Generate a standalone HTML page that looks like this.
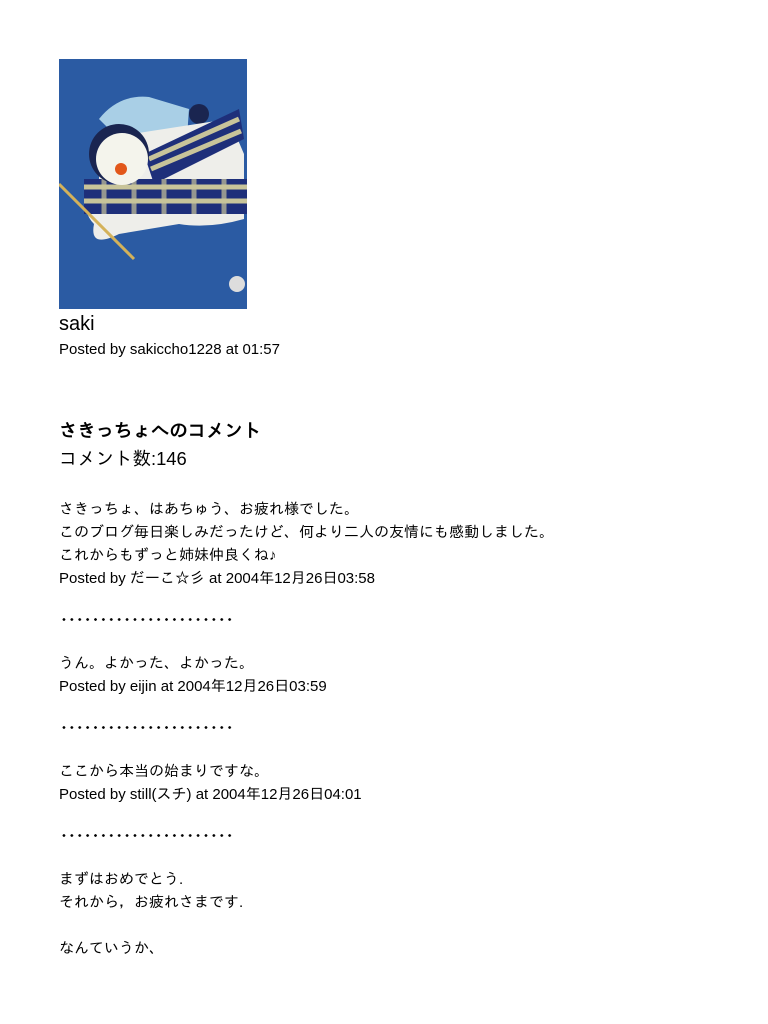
<!DOCTYPE html>
<html><head><meta charset="utf-8"><style>
body{margin:0;background:#fff;width:768px;height:1024px;position:relative;overflow:hidden;font-family:"Liberation Sans","IPAGothic","Noto Sans CJK JP",sans-serif;color:#000}
.t{position:absolute;left:59px;white-space:nowrap;font-size:15px;line-height:23px}
.b{font-size:20px;line-height:26px}
.h{font-weight:bold;font-size:18.4px}
.c{font-size:18.4px}
.d{position:absolute;left:60px;width:174px;height:3px;background:radial-gradient(circle,#000 1.2px,transparent 1.5px) 0 0/7.9px 3px repeat-x}
</style></head><body>
<svg style="position:absolute;left:59px;top:59px" width="188" height="250" viewBox="0 0 188 250">
<rect width="188" height="250" fill="#2b5ba3"/>
<path d="M40 60 Q60 35 90 38 L130 50 L128 78 L60 80Z" fill="#a9cfe6"/>
<circle cx="140" cy="55" r="10" fill="#1a2550"/>
<path d="M40 80 L170 60 L185 95 L185 160 Q150 170 120 165 L60 175 Q30 190 35 165 Q20 150 40 140Z" fill="#eeeeea"/>
<path d="M85 95 L180 50 L185 80 L95 125Z" fill="#1e2f7a"/>
<path d="M90 100 L180 60 M92 110 L182 72" stroke="#c8c49a" stroke-width="5"/>
<rect x="25" y="120" width="163" height="35" fill="#1e2f7a"/>
<path d="M25 128 H188 M25 142 H188" stroke="#c8c49a" stroke-width="5"/>
<path d="M45 120 V155 M75 120 V155 M105 120 V155 M135 120 V155 M165 120 V155" stroke="#c8c49a" stroke-width="5" opacity=".7"/>
<circle cx="60" cy="95" r="30" fill="#1a2550"/>
<circle cx="63" cy="100" r="26" fill="#f4f4ec"/>
<circle cx="62" cy="110" r="6" fill="#e2571a"/>
<path d="M0 125 L75 200" stroke="#d4b25a" stroke-width="3"/>
<circle cx="178" cy="225" r="8" fill="#ddd"/>
</svg>
<div class="t b" style="top:311px">saki</div>
<div class="t" style="top:338px">Posted by sakiccho1228 at 01:57</div>
<div class="t b h" style="top:418px">さきっちょへのコメント</div>
<div class="t b c" style="top:446px">コメント数:146</div>
<div class="t" style="top:498px">さきっちょ、はあちゅう、お疲れ様でした。<br>このブログ毎日楽しみだったけど、何より二人の友情にも感動しました。<br>これからもずっと姉妹仲良くね♪<br>Posted by だーこ☆彡 at 2004年12月26日03:58</div>
<div class="d" style="top:618px"></div>
<div class="t" style="top:652px">うん。よかった、よかった。<br>Posted by eijin at 2004年12月26日03:59</div>
<div class="d" style="top:726px"></div>
<div class="t" style="top:760px">ここから本当の始まりですな。<br>Posted by still(スチ) at 2004年12月26日04:01</div>
<div class="d" style="top:834px"></div>
<div class="t" style="top:868px">まずはおめでとう.<br>それから，お疲れさまです.<br><br>なんていうか、</div>
</body></html>
